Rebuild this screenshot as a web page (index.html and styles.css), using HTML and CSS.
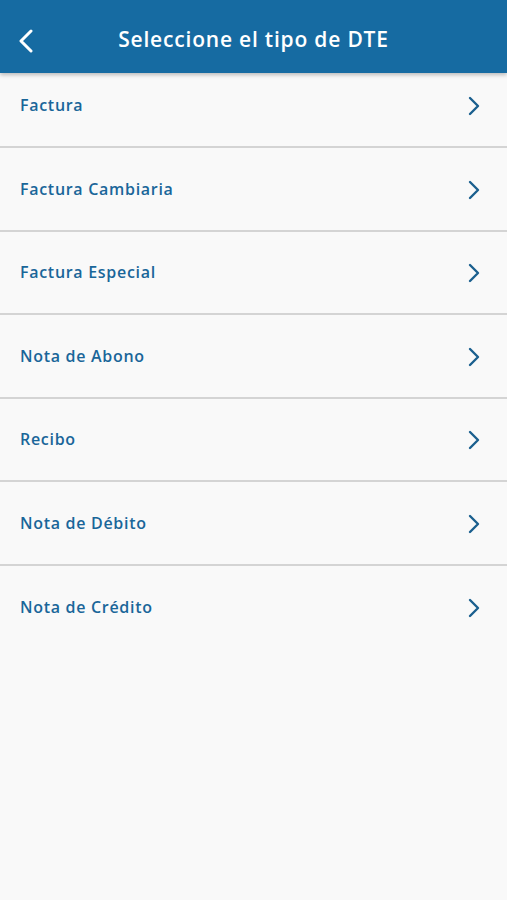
FILE: index.html
```html
<!DOCTYPE html>
<html lang="es">
<head>
  <meta charset="UTF-8" />
  <meta name="viewport" content="width=device-width, initial-scale=1.0"/>
  <title>Seleccione el tipo de DTE</title>
  <link rel="stylesheet" href="styles.css">
</head>
<body>
<div class="header">
  <a href="#" class="back">
    <svg width="16" height="24" viewBox="0 0 16 24"><path d="M13 2 L3 12 L13 22" fill="none" stroke="#fff" stroke-width="3" stroke-linecap="round" stroke-linejoin="round"/></svg>
  </a>
  <h1>Seleccione el tipo de DTE</h1>
</div>
<ul class="list">
  <li class="first"><span>Factura</span><svg class="chev" width="14" height="20" viewBox="0 0 14 20"><path d="M3 2 L11 10 L3 18" fill="none" stroke="#1a5f8e" stroke-width="2.4" stroke-linecap="round" stroke-linejoin="round"/></svg></li>
  <li><span>Factura Cambiaria</span><svg class="chev" width="14" height="20" viewBox="0 0 14 20"><path d="M3 2 L11 10 L3 18" fill="none" stroke="#1a5f8e" stroke-width="2.4" stroke-linecap="round" stroke-linejoin="round"/></svg></li>
  <li><span>Factura Especial</span><svg class="chev" width="14" height="20" viewBox="0 0 14 20"><path d="M3 2 L11 10 L3 18" fill="none" stroke="#1a5f8e" stroke-width="2.4" stroke-linecap="round" stroke-linejoin="round"/></svg></li>
  <li><span>Nota de Abono</span><svg class="chev" width="14" height="20" viewBox="0 0 14 20"><path d="M3 2 L11 10 L3 18" fill="none" stroke="#1a5f8e" stroke-width="2.4" stroke-linecap="round" stroke-linejoin="round"/></svg></li>
  <li><span>Recibo</span><svg class="chev" width="14" height="20" viewBox="0 0 14 20"><path d="M3 2 L11 10 L3 18" fill="none" stroke="#1a5f8e" stroke-width="2.4" stroke-linecap="round" stroke-linejoin="round"/></svg></li>
  <li><span>Nota de Débito</span><svg class="chev" width="14" height="20" viewBox="0 0 14 20"><path d="M3 2 L11 10 L3 18" fill="none" stroke="#1a5f8e" stroke-width="2.4" stroke-linecap="round" stroke-linejoin="round"/></svg></li>
  <li class="last"><span>Nota de Crédito</span><svg class="chev" width="14" height="20" viewBox="0 0 14 20"><path d="M3 2 L11 10 L3 18" fill="none" stroke="#1a5f8e" stroke-width="2.4" stroke-linecap="round" stroke-linejoin="round"/></svg></li>
</ul>
</body>
</html>
```
FILE: styles.css
```css
* { margin: 0; padding: 0; box-sizing: border-box; font-family: "Open Sans", "Lato", sans-serif; }
body {
  background: #f9f9f9;
  height: 100vh;
}
.header {
  height: 73px;
  padding-top: 4px;
  background: #166ba2;
  display: flex;
  align-items: center;
  justify-content: center;
  position: relative;
  box-shadow: 0 2px 4px rgba(0,0,0,0.25);
  z-index: 1;
}
.back {
  position: absolute;
  left: 18px;
  top: 29px;
  display: flex;
}
.header h1 {
  color: #fff;
  font-size: 21px;
  font-weight: 600;
  letter-spacing: 0.8px;
}
.list { list-style: none; }
.list li {
  height: 83.5px;
  display: flex;
  align-items: center;
  justify-content: space-between;
  padding: 0 26px 0 20px;
  border-bottom: 2px solid #d4d4d4;
  color: #1a6699;
  font-size: 16px;
  font-weight: 600;
  letter-spacing: 0.7px;
}
.list li.first { height: 75px; padding-bottom: 10px; }
.list li.last { border-bottom: none; }
.chev { margin-top: 2px; }
```
